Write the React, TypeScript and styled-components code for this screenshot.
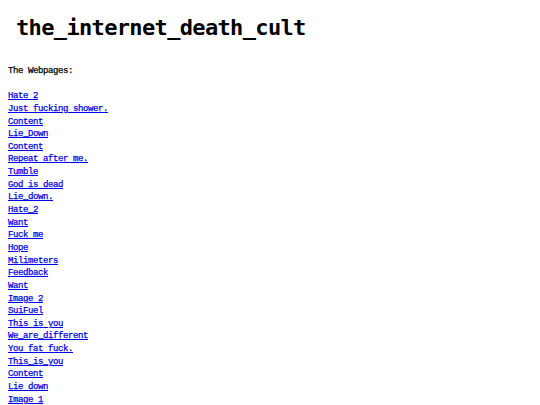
import styled, { createGlobalStyle } from "styled-components";

const pages = [
  "Hate 2",
  "Just fucking shower.",
  "Content",
  "Lie_Down",
  "Content",
  "Repeat after me.",
  "Tumble",
  "God is dead",
  "Lie_down.",
  "Hate_2",
  "Want",
  "Fuck me",
  "Hope",
  "Milimeters",
  "Feedback",
  "Want",
  "Image 2",
  "SuiFuel",
  "This is you",
  "We_are_different",
  "You fat fuck.",
  "This_is_you",
  "Content",
  "Lie down",
  "Image 1",
];

const GlobalStyle = createGlobalStyle`
  body {
    margin: 0;
    background: #ffffff;
    color: #000000;
    font-family: "Liberation Mono", "DejaVu Sans Mono", monospace;
  }
`;

const Page = styled.main`
  padding: 0 8px;
`;

const Title = styled.h1`
  margin: 0;
  padding: 13px 0 0 8px;
  font-family: "DejaVu Sans Mono", "Liberation Mono", monospace;
  font-size: 22px;
  line-height: 30px;
  font-weight: bold;
  letter-spacing: -0.65px;
`;

const Intro = styled.p`
  margin: 22px 0 0;
  font-size: 9px;
  line-height: 12.64px;
  letter-spacing: -0.4px;
  -webkit-text-stroke: 0.25px #000000;
`;

const List = styled.nav`
  display: flex;
  flex-direction: column;
  align-items: flex-start;
  margin-top: 12.64px;
`;

const PageLink = styled.a`
  font-size: 9px;
  line-height: 12.64px;
  letter-spacing: -0.4px;
  color: #0000ee;
  text-decoration: underline;
  -webkit-text-stroke: 0.25px #0000ee;
`;

export default function App() {
  return (
    <>
      <GlobalStyle />
      <Page>
        <Title>the_internet_death_cult</Title>
        <Intro>The Webpages:</Intro>
        <List>
          {pages.map((name, i) => (
            <PageLink key={i} href="#">
              {name}
            </PageLink>
          ))}
        </List>
      </Page>
    </>
  );
}
